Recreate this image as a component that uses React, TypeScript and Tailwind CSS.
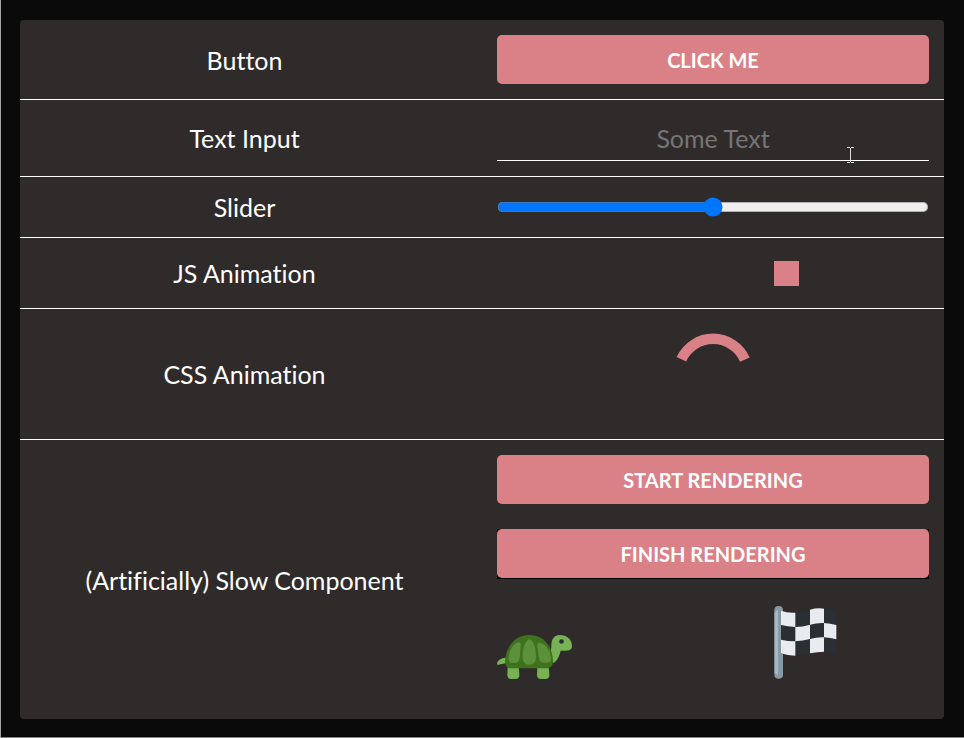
import { useState } from 'react';
import type { ReactNode } from 'react';

function Row({ label, htmlFor, children }: { label: string; htmlFor?: string; children: ReactNode }) {
  return (
    <div className="grid grid-cols-2 items-center gap-[30px] border-b border-white p-[15px] last:border-b-0">
      {htmlFor ? (
        <label htmlFor={htmlFor} className="pr-[13px] text-center">
          {label}
        </label>
      ) : (
        <div className="pr-[13px] text-center">{label}</div>
      )}
      <div className="min-w-0">{children}</div>
    </div>
  );
}

function ActionButton({ children, onClick }: { children: ReactNode; onClick?: () => void }) {
  return (
    <button
      type="button"
      onClick={onClick}
      className="block h-[49px] w-full rounded-[5px] bg-[#da8187] text-center text-[20px] font-bold text-white uppercase"
    >
      {children}
    </button>
  );
}

function Spinner() {
  return (
    <svg viewBox="0 0 100 100" className="mx-auto block h-[100px] w-[100px]" aria-hidden="true">
      <path d="M18.4 35.2A34.8 34.8 0 0 1 81.9 35.6" fill="none" stroke="#da8187" strokeWidth="10.5" />
    </svg>
  );
}

function Turtle() {
  return (
    <svg viewBox="51 42 225 225" className="h-[75px] w-[75px] shrink-0" role="img" aria-label="Turtle">
      <path d="M51 223C51 212 62 203 78 203V220C70 220 64 224 55 224Q51 225 51 223Z" fill="#77b255" />
      <path d="M84 228H115Q118 242 118 254Q118 267 106 267H94Q82 267 82 254Q82 242 84 228Z" fill="#77b255" />
      <path d="M173 228H205Q208 242 208 254Q208 267 196 267H183Q171 267 171 254Q171 242 173 228Z" fill="#77b255" />
      <path d="M214 172C213 146 223 135 240 135C260 135 276 148 276 168C276 178 269 182 258 182H242C238 198 232 213 220 219L210 200Z" fill="#77b255" />
      <path d="M148 135C190 135 218 168 219 214C219 228 211 235 196 235H94C81 235 75 228 75 215C78 167 107 135 148 135Z" fill="#3e721d" />
      <path d="M148 147C162 154 168 176 168 201C168 217 160 224 148 224C136 224 128 217 128 201C128 176 134 154 148 147Z" fill="#5c913b" />
      <path d="M113 158C122 157 123 161 122 170L119 203C118 214 113 219 102 219C92 219 86 216 86 206C86 184 99 160 113 158Z" fill="#5c913b" />
      <path d="M178 159C196 158 213 184 213 207C213 216 207 218 197 218C185 218 178 215 177 203L172 171C171 163 171 159 178 159Z" fill="#5c913b" />
      <circle cx="244.500" cy="154.500" r="7" fill="#292f33" />
    </svg>
  );
}

function FinishFlag() {
  return (
    <svg viewBox="72 42 225 225" className="h-[75px] w-[75px] shrink-0" role="img" aria-label="Chequered flag">
      <path d="M73 61Q73 48 86 48Q99 48 99 61V254Q99 266 86 266Q73 266 73 254Z" fill="#8899a6" />
      <path d="M74 70Q76 62 84 60V254Q76 256 74 247Z" fill="#aab8c2" />
      <path d="M93 62Q114 70 136 68Q158 67 180 59Q201 53 222 56Q241 58 259 65V190Q241 186 222 185Q201 185 180 190Q158 197 136 197Q113 197 93 190Z" fill="#292f33" />
      <g fill="#e9ebee">
        <path d="M93 62Q114 70 136 68V111Q113 110 93 105Z" />
        <path d="M180 59Q201 53 222 56V99Q201 98 180 104Z" />
        <path d="M136 111Q158 111 180 104V147Q158 153 136 154Z" />
        <path d="M222 99Q241 100 259 105V148Q241 143 222 142Z" />
        <path d="M93 149Q113 154 136 154V197Q113 197 93 190Z" />
        <path d="M180 147Q201 141 222 142V185Q201 185 180 190Z" />
      </g>
    </svg>
  );
}

function TextCursor() {
  return (
    <svg viewBox="0 0 7 16" className="pointer-events-none absolute right-[75px] bottom-[-2px] h-[16px] w-[7px]" aria-hidden="true">
      <path d="M0 .5H3M4 .5H7M3.500 1V15M0 15.500H3M4 15.500H7" fill="none" stroke="#dedede" />
    </svg>
  );
}

export default function App() {
  const [text, setText] = useState('');
  const [value, setValue] = useState(50);

  return (
    <main className="min-h-screen border-b border-l border-b-[#858585] border-l-[#a5a5a5] bg-[#0a0a0a] pt-[20px] pr-[20px] pb-[18px] pl-[19px] font-['Lato',sans-serif] text-[25px] leading-[30px] text-white [font-variant-ligatures:none]">
      <div className="rounded-[4px] bg-[#302b2b]">
        <Row label="Button">
          <ActionButton>Click me</ActionButton>
        </Row>
        <Row label="Text Input" htmlFor="text-input">
          <div className="relative">
            <input
              id="text-input"
              type="text"
              placeholder="Some Text"
              value={text}
              onChange={(e) => setText(e.target.value)}
              className="block h-[46px] w-full border-b border-white bg-transparent text-center outline-none placeholder:text-[#757575]"
            />
            <TextCursor />
          </div>
        </Row>
        <Row label="Slider" htmlFor="slider">
          <input
            id="slider"
            type="range"
            min={0}
            max={100}
            value={value}
            onChange={(e) => setValue(Number(e.target.value))}
            className="block w-full accent-[#0075ff] [zoom:1.25]"
          />
        </Row>
        <Row label="JS Animation">
          <div className="flex h-[40px] items-center">
            <div className="ml-[277px] h-[25px] w-[25px] bg-[#da8187]" />
          </div>
        </Row>
        <Row label="CSS Animation">
          <Spinner />
        </Row>
        <Row label="(Artificially) Slow Component">
          <div className="flex flex-col gap-[25px]">
            <ActionButton>Start rendering</ActionButton>
            <div className="h-[50px] bg-black">
              <ActionButton>Finish rendering</ActionButton>
            </div>
            <div className="flex h-[100px] gap-[202px]">
              <Turtle />
              <FinishFlag />
            </div>
          </div>
        </Row>
      </div>
    </main>
  );
}
